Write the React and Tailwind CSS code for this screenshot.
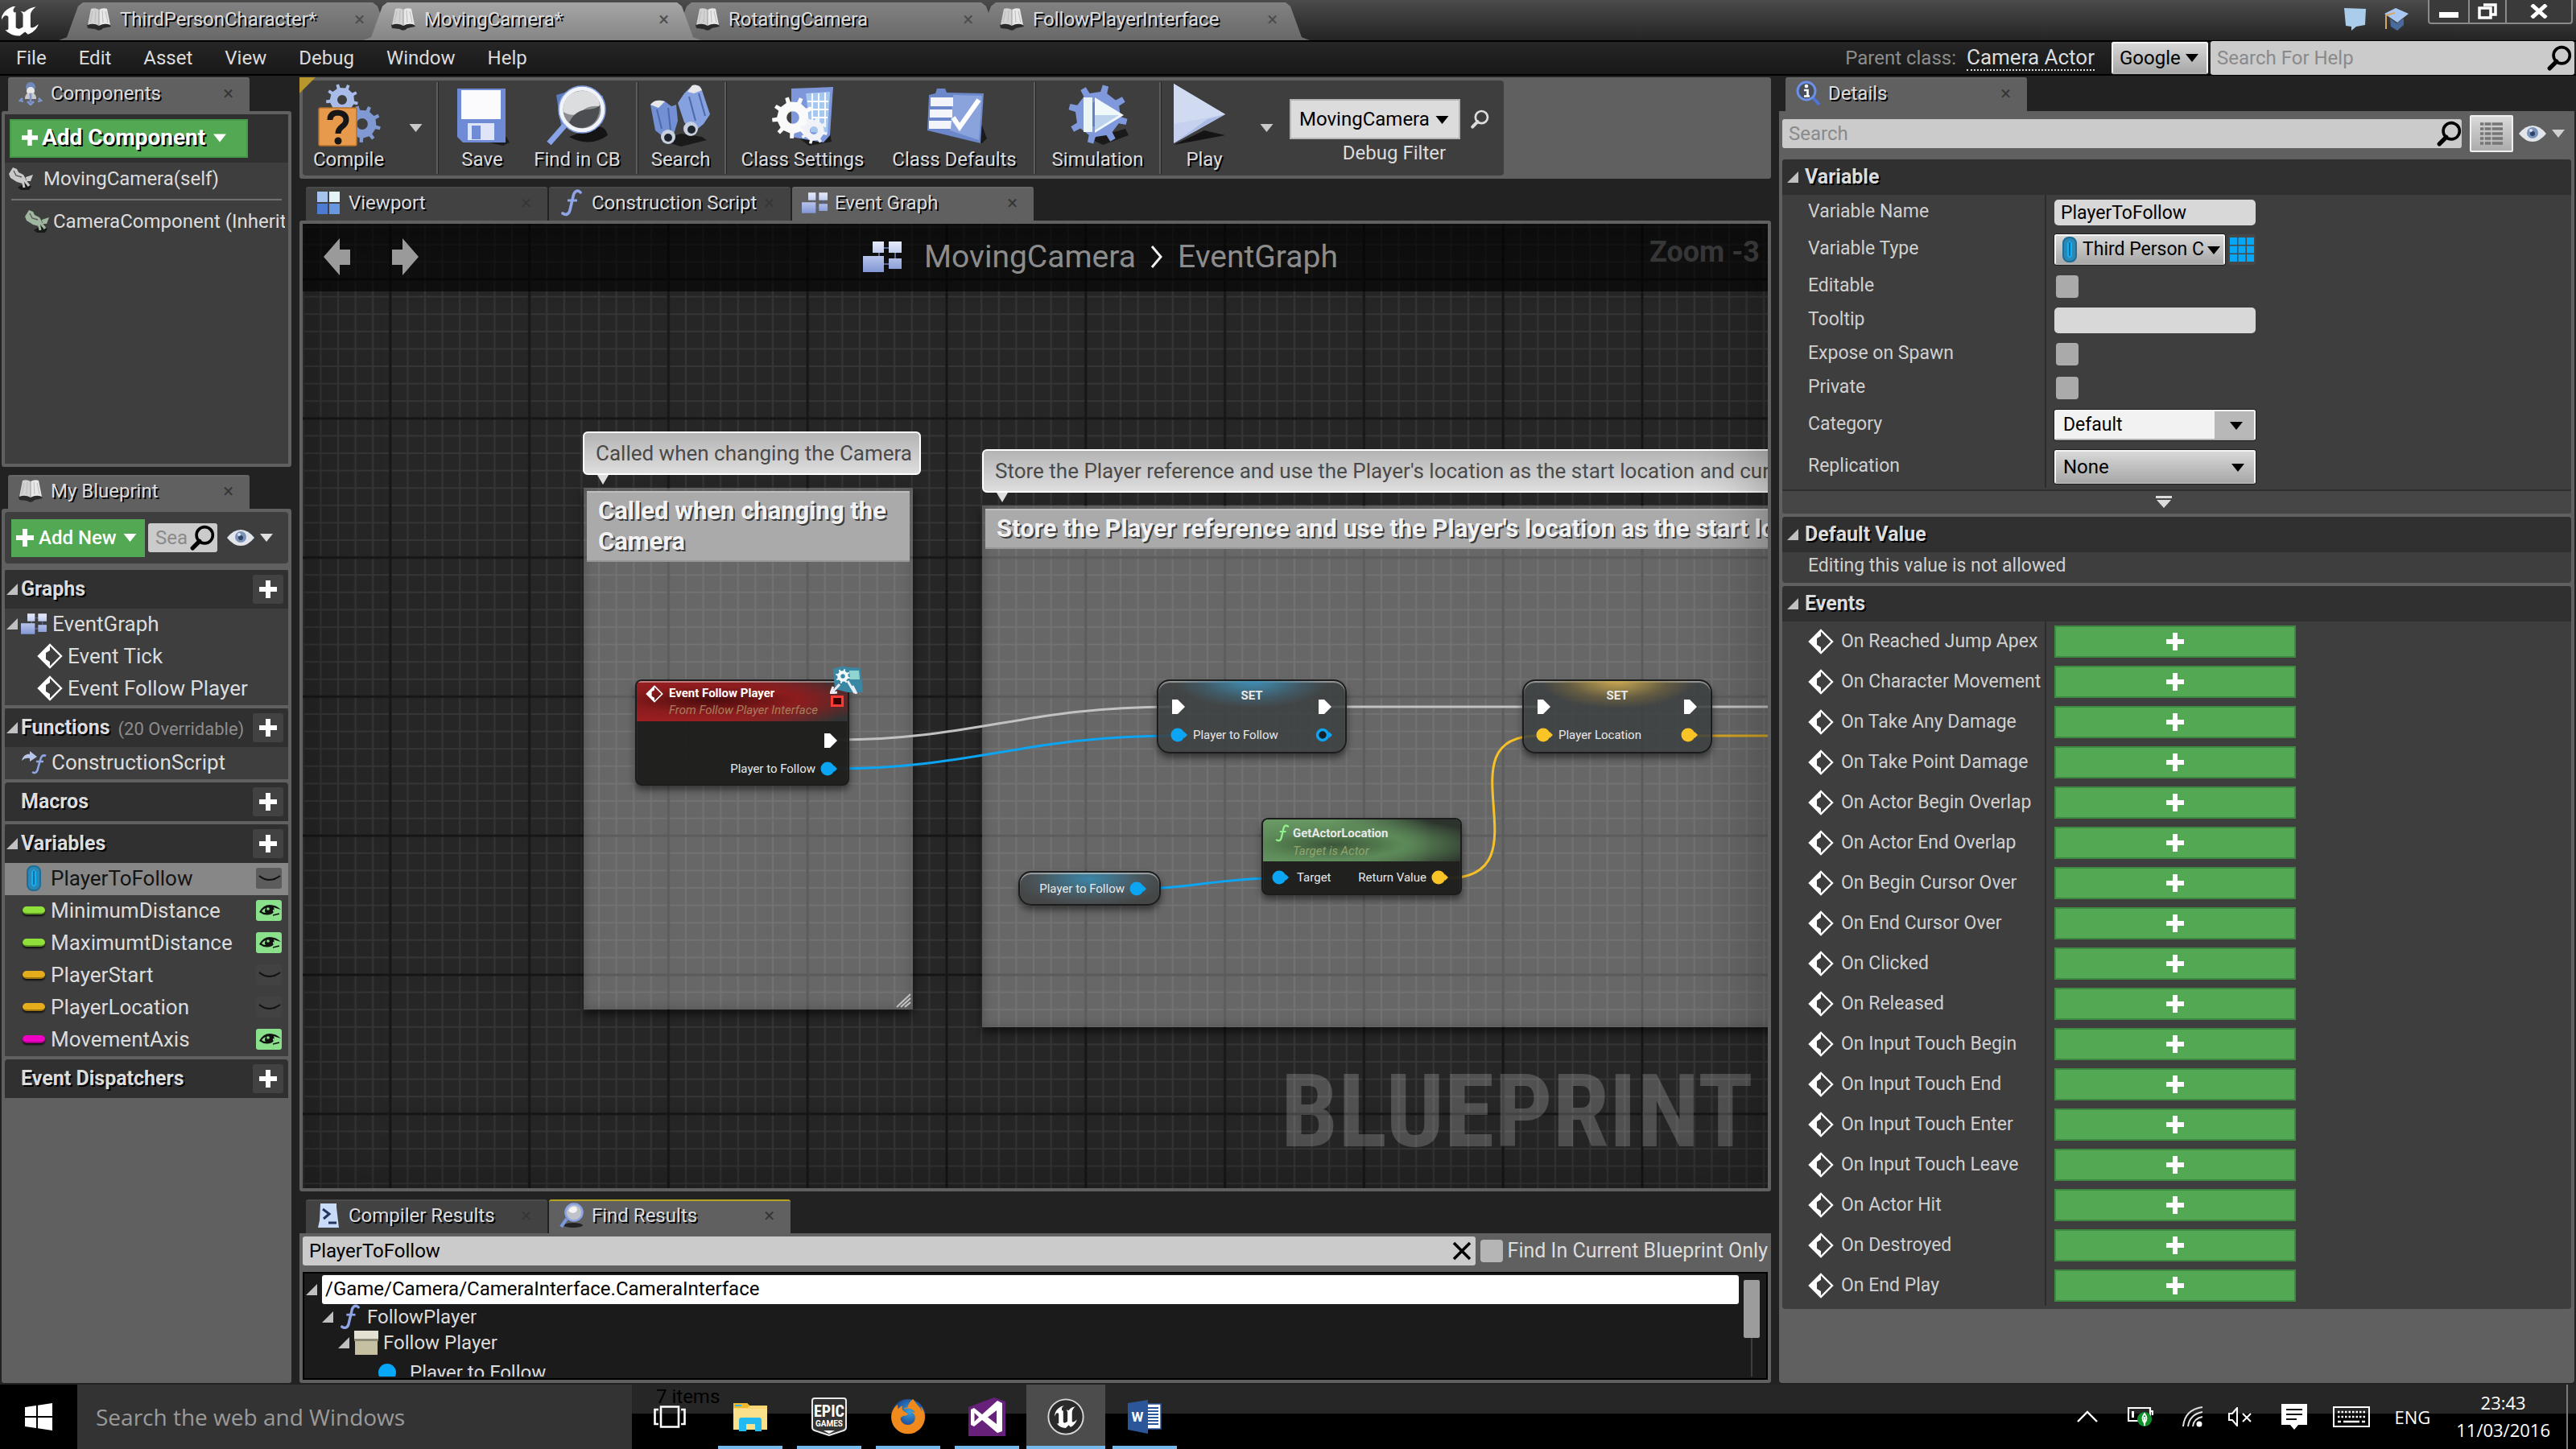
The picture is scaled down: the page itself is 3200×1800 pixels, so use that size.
import React, { useState } from "react";
import { FaFirefoxBrowser } from "react-icons/fa";

const U_PATH =
  "M19.13 13.729c-.206.997-1.126 3.557-4.06 4.942l-1.179-1.325-1.988 2a7.338 7.338 0 0 1-5.804-2.978 2.859 2.859 0 0 0 .65.123c.326.006.678-.114.678-.66v-5.394a.89.89 0 0 0-1.116-.89c-.92.212-1.656 2.509-1.656 2.509a7.304 7.304 0 0 1 2.528-5.597 7.408 7.408 0 0 1 3.73-1.721c-1.006.573-1.57 1.507-1.57 2.29 0 1.262.76 1.109.984.923v7.28a1.157 1.157 0 0 0 .148.256 1.075 1.075 0 0 0 .88.445c.76 0 1.747-.868 1.747-.868V9.172c0-.6-.452-1.324-.905-1.572 0 0 .838-.149 1.484.346a5.537 5.537 0 0 1 .387-.425c1.508-1.48 2.929-1.902 4.112-2.112 0 0-2.151 1.69-2.151 3.96 0 1.687.043 5.801.043 5.801.799.771 1.986-.342 3.059-1.441z";

/* ---------- small icons ---------- */

const Down = ({ className = "w-4 h-3" }) => (
  <svg viewBox="0 0 16 10" className={`shrink-0 ${className}`} aria-hidden="true">
    <path d="M0 0H16L8 10Z" fill="currentColor" />
  </svg>
);

const Corner = () => (
  <svg viewBox="0 0 14 14" className="w-[14px] h-[14px] shrink-0" aria-hidden="true">
    <path d="M14 0V14H0Z" fill="#c0c0c0" />
  </svg>
);

const Plus = ({ className = "w-[22px] h-[22px]" }) => (
  <svg viewBox="0 0 22 22" className={`shrink-0 ${className}`} aria-hidden="true">
    <path d="M8 0H14V8H22V14H14V22H8V14H0V8H8Z" fill="#fff" />
  </svg>
);

const Magnifier = ({ className = "w-[30px] h-[30px]" }) => (
  <svg viewBox="0 0 30 30" className={`shrink-0 ${className}`} aria-hidden="true">
    <circle cx="18" cy="12" r="9.5" fill="none" stroke="currentColor" strokeWidth="3.4" />
    <path d="M12 19L4 27" stroke="currentColor" strokeWidth="5" strokeLinecap="round" />
  </svg>
);

const Eye = () => (
  <svg viewBox="0 0 36 22" className="w-[36px] h-[22px] shrink-0" aria-hidden="true">
    <path d="M1 11Q9 1 18 1T35 11Q27 21 18 21T1 11Z" fill="#e2e6ea" />
    <circle cx="18" cy="10" r="7" fill="#7b93ba" />
    <circle cx="18" cy="11" r="3" fill="#2d4265" />
    <circle cx="16" cy="7" r="2" fill="#d7e2f3" />
  </svg>
);

const EventIcon = ({ className = "w-[32px] h-[32px]" }) => (
  <svg viewBox="0 0 32 32" className={`shrink-0 ${className}`} aria-hidden="true">
    <path d="M16 2L30 16L16 30L2 16Z" fill="none" stroke="#fff" strokeWidth="2.4" />
    <path d="M16 2V9L11 12V20L16 23V30L2 16Z" fill="#fff" />
  </svg>
);

const GraphIcon = ({ className = "w-[32px] h-[26px]" }) => (
  <svg viewBox="0 0 48 38" className={`shrink-0 ${className}`} aria-hidden="true">
    <defs>
      <linearGradient id="graphFill" x1="0" y1="0" x2="0" y2="1">
        <stop offset="0" stopColor="#e6ebfb" />
        <stop offset="1" stopColor="#8297d6" />
      </linearGradient>
    </defs>
    <path d="M20 8H40V28H20Z" fill="none" stroke="#5a6794" strokeWidth="2" />
    <path d="M12 0H26V14H12ZM32 0H48V14H32ZM0 18H26V38H0ZM32 21H48V34H32Z" fill="url(#graphFill)" />
  </svg>
);

const FuncIcon = ({ className = "w-[28px] h-[34px]", color = "#8fa5e6" }) => (
  <svg viewBox="0 0 28 34" className={`shrink-0 ${className}`} aria-hidden="true">
    <path d="M25 4C21 0 17 3 16 9L12 26C11 31 7 33 3 30" fill="none" stroke={color} strokeWidth="3.6" strokeLinecap="round" />
    <path d="M9 14H21" stroke={color} strokeWidth="3" />
  </svg>
);

const ScriptIcon = () => (
  <svg viewBox="0 0 32 30" className="w-[32px] h-[30px] shrink-0" aria-hidden="true">
    <path d="M1 13C3 5 9 4 11 5V1L20 8L11 14V10C7 9 4 10 1 13Z" fill="#b8c5ea" />
    <path d="M31 7C27 5 25 8 24 12L21 23C20 28 17 29 14 27M19 14H28" fill="none" stroke="#8fa5e6" strokeWidth="2.6" />
  </svg>
);

const BookIcon = ({ className = "w-[32px] h-[30px]" }) => (
  <svg viewBox="0 0 32 30" className={`shrink-0 ${className}`} aria-hidden="true">
    <path d="M1 22L4 20L28 20L31 24L21 26Q17 31 11 27L2 26Z" fill="#2a2a2a" />
    <path d="M6 2Q11 0 16 3V23Q9 19 2 22Z" fill="#d2d2d2" />
    <path d="M26 2Q21 0 16 3V23Q23 19 30 22Z" fill="#e8e8e8" />
    <path d="M8 5L5 19M12 4L11 19M20 4L21 19M24 5L27 19" stroke="#bcbcbc" strokeWidth="1" />
    <path d="M16 3V23" stroke="#9a9a9a" strokeWidth="1" />
  </svg>
);

const PawnIcon = () => (
  <svg viewBox="0 0 30 30" className="w-[30px] h-[30px] shrink-0" aria-hidden="true">
    <circle cx="15" cy="7" r="6" fill="#7088bd" />
    <circle cx="15" cy="12" r="5" fill="#e8e8e8" />
    <path d="M8 22Q8 14 15 14T22 22Z" fill="#c9c9c9" />
    <path d="M15 15V26M5 21L2 24L6 25M25 21L28 24L24 25M11 25L15 29L19 25" fill="none" stroke="#7c95cd" strokeWidth="2.6" />
  </svg>
);

const CameraIcon = ({ tint }) => (
  <svg viewBox="0 0 32 28" className="w-[32px] h-[28px] shrink-0" aria-hidden="true">
    <path d="M12 25L20 20L29 23L26 28H16Z" fill="#191919" />
    <path d="M1 8L6 0L11 2L13 6L19 9L22 14L18 20L11 18L3 13Z" fill={tint} />
    <path d="M22 12L31 9L28 17L23 17Z" fill={tint} />
    <path d="M18 16L20 25M20 15L26 23" stroke={tint} strokeWidth="3" />
    <path d="M7 4L10 10L17 12" fill="none" stroke="#5a5a5a" strokeWidth="1.4" />
  </svg>
);

const DetailsIcon = () => (
  <svg viewBox="0 0 32 32" className="w-[32px] h-[32px] shrink-0" aria-hidden="true">
    <path d="M22 21L30 30" stroke="#4d74d6" strokeWidth="4" />
    <circle cx="14" cy="13" r="11" fill="#4a4f5c" stroke="#6c8fe8" strokeWidth="3" />
    <circle cx="14" cy="7" r="2.3" fill="#fff" />
    <path d="M11 12H15.5V19M11 19.5H18" fill="none" stroke="#fff" strokeWidth="2.6" />
  </svg>
);

const ViewportIcon = () => (
  <svg viewBox="0 0 28 28" className="w-[28px] h-[28px] shrink-0" aria-hidden="true">
    <path d="M0 0H13V13H0Z" fill="#a6c3ee" />
    <path d="M15 0H28V13H15Z" fill="#e4f4f6" />
    <path d="M0 15H13V28H0Z" fill="#4c7bd0" />
    <path d="M15 15H28V28H15Z" fill="#6a98e0" />
  </svg>
);

const CompilerIcon = () => (
  <svg viewBox="0 0 28 32" className="w-[28px] h-[32px] shrink-0" aria-hidden="true">
    <path d="M4 1H24V6L27 31H1L3 22Z" fill="#c9dcf7" />
    <path d="M7 8L15 14L8 20M14 25H24" fill="none" stroke="#22355e" strokeWidth="3" />
  </svg>
);

const GlassIcon = () => (
  <svg viewBox="0 0 30 32" className="w-[30px] h-[32px] shrink-0" aria-hidden="true">
    <ellipse cx="17" cy="28" rx="12" ry="3" fill="#222" />
    <path d="M9 20L2 30" stroke="#7c98df" strokeWidth="4" />
    <circle cx="18" cy="12" r="10.5" fill="#bfc3c9" stroke="#8aa4e4" strokeWidth="2.5" />
    <path d="M11 10Q14 4 20 5Q24 8 20 12Q14 14 11 10Z" fill="#f4f4f4" />
  </svg>
);

const Capsule = () => (
  <svg viewBox="0 0 18 32" className="w-[18px] h-[32px] shrink-0" aria-hidden="true">
    <rect x="1" y="1" width="16" height="30" rx="7" fill="#2b88b4" stroke="#1c6d97" strokeWidth="2" />
    <path d="M6 8L9 5L12 8V24L9 27L6 24Z" fill="#0fb0f5" />
    <path d="M9 7V24" stroke="#0a5c86" strokeWidth="1.5" />
  </svg>
);

const gearPath = (cx, cy, r, teeth) => {
  const pts = [];
  for (let i = 0; i < teeth; i++) {
    const a = (i / teeth) * Math.PI * 2;
    const s = (Math.PI * 2) / teeth;
    [[0.14, 0.76], [0.2, 1], [0.46, 1], [0.52, 0.76]].forEach(([t, k]) => {
      pts.push(`${(cx + Math.cos(a + s * t) * r * k).toFixed(1)} ${(cy + Math.sin(a + s * t) * r * k).toFixed(1)}`);
    });
  }
  const h = r * 0.3;
  return `M${pts.join("L")}ZM${cx - h} ${cy}a${h} ${h} 0 1 0 ${2 * h} 0a${h} ${h} 0 1 0 ${-2 * h} 0Z`;
};

const Gear = ({ cx, cy, r, teeth = 9, fill }) => (
  <path d={gearPath(cx, cy, r, teeth)} fill={fill} fillRule="evenodd" />
);

/* ---------- toolbar icons ---------- */

const Big = ({ children }) => (
  <svg viewBox="0 0 80 78" className="w-[80px] h-[78px] shrink-0" aria-hidden="true">
    {children}
  </svg>
);

const CompileIcon = () => (
  <Big>
    <Gear cx={32} cy={20} r={20} fill="#a8bbe9" />
    <Gear cx={57} cy={50} r={23} fill="#8199d2" />
    <rect x="3" y="30" width="47" height="47" rx="2" fill="#e79a4c" stroke="#b8702a" strokeWidth="1.5" />
    <path d="M17 45Q17 36 27 36Q37 37 37 45Q37 50 31 54Q27 57 27 62" fill="none" stroke="#161616" strokeWidth="7" />
    <circle cx="27" cy="71" r="4.5" fill="#161616" />
  </Big>
);

const SaveIcon = () => (
  <Big>
    <path d="M18 66H70L74 73L66 77Z" fill="#1d1d1d" />
    <path d="M9 6H69V73H16L9 66Z" fill="#6f8bd6" />
    <path d="M14 8H63V44H14Z" fill="#fbfbfd" />
    <path d="M22 49H55V70H22Z" fill="#dfe5f6" />
    <path d="M27 52H38V69H27Z" fill="#6f8bd6" />
  </Big>
);

const FindIcon = () => (
  <Big>
    <path d="M14 14L28 10L72 15L70 46L20 52Z" fill="#5b7bbd" />
    <path d="M30 66Q56 80 78 64Q74 50 60 54Z" fill="#141414" />
    <path d="M26 50L5 74" stroke="#88a3e8" strokeWidth="7" />
    <circle cx="46" cy="32" r="26" fill="#8b8d90" stroke="#f1f4fb" strokeWidth="5" />
    <circle cx="46" cy="32" r="29" fill="none" stroke="#86a0e4" strokeWidth="1.5" />
    <path d="M23 35Q21 12 44 9Q67 8 68 28Q52 26 44 36Q34 42 23 35Z" fill="#dcdddf" />
    <path d="M30 48Q38 32 54 32Q64 31 68 27Q68 52 46 55Q36 55 30 48Z" fill="#4b4d50" />
  </Big>
);

const BinocularsIcon = () => (
  <Big>
    <path d="M14 70L40 62L66 66L72 70L40 78Z" fill="#1a1a1a" />
    <path d="M2 26Q8 18 20 22L28 28L34 26L36 46L30 66H18L8 58Z" fill="#7390d4" />
    <path d="M36 24L44 12L54 2Q64 0 66 8L76 38L68 50L56 60L44 48Z" fill="#86a1e0" />
    <path d="M2 26Q8 18 20 22L12 30ZM54 2Q62 0 66 8L56 12L48 10Z" fill="#e8e8e8" />
    <path d="M10 32L16 56M24 30L27 58M50 16L58 46M62 12L70 40" stroke="#4d68ac" strokeWidth="2" />
    <circle cx="24" cy="66" r="9" fill="#c8cfde" />
    <circle cx="24" cy="67" r="5" fill="#20242c" />
    <circle cx="52" cy="56" r="9" fill="#c8cfde" />
    <circle cx="53" cy="57" r="5" fill="#20242c" />
  </Big>
);

const SettingsIcon = () => (
  <Big>
    <path d="M34 66L74 62L76 72L48 77Z" fill="#1a1a1a" />
    <path d="M26 6L78 4L74 64L66 73L26 66Z" fill="#7d97da" />
    <path d="M44 12L74 10L71 62L50 60Z" fill="#a6c8ee" />
    <path d="M52 12V46M60 12V50M68 11V54M46 22H72M46 32H72M52 42H71" stroke="#fff" strokeWidth="1.8" />
    <Gear cx={28} cy={42} r={26} teeth={9} fill="#fafafa" />
    <Gear cx={54} cy={58} r={17} teeth={8} fill="#f0f2f8" />
  </Big>
);

const DefaultsIcon = () => (
  <Big>
    <path d="M42 62L74 74L80 68L74 52Z" fill="#1a1a1a" />
    <path d="M8 14L16 12L18 6H28L30 11L76 12L72 74L6 58Z" fill="#6d88ca" />
    <path d="M38 14L74 15L70 70L34 58Z" fill="#8ba3dd" />
    <path d="M10 17H38V28H10ZM9 32H37V42H9ZM8 46H36L35 56H8Z" fill="#f4f5fa" />
    <path d="M38 42L46 54L70 20" fill="none" stroke="#fff" strokeWidth="6" />
  </Big>
);

const SimulationIcon = () => (
  <Big>
    <path d="M30 68L74 56L78 64L46 76Z" fill="#1a1a1a" />
    <Gear cx={40} cy={38} r={37} teeth={8} fill="#7f99dc" />
    <circle cx="40" cy="38" r="16" fill="#6780c2" />
    <path d="M22 17H33V60H22Z" fill="#e8f4f6" />
    <path d="M36 17L72 39L36 61Z" fill="#f0f8fa" />
    <path d="M36 39H66L36 58Z" fill="#bcd3ee" />
  </Big>
);

const PlayIcon = () => (
  <Big>
    <path d="M2 76L66 64L40 58Z" fill="#141414" />
    <path d="M2 0L66 38L2 74Z" fill="#c5d1ee" />
    <path d="M2 0L66 38L2 50Z" fill="#d0dbf1" />
    <path d="M2 74L66 38L44 44Z" fill="#a9bbe4" />
  </Big>
);

/* ---------- shared pieces ---------- */

const DockTab = ({ icon, label, active, highlight }) => (
  <div
    className={`flex items-center w-[300px] h-[42px] pl-3 pr-5 pb-1 gap-[9px] rounded-t-[3px] border-t-2 ${
      active ? "bg-[#606060]" : "bg-[#424242]"
    } ${highlight ? "border-[#b5a321]" : active ? "border-[#686868]" : "border-[#4a4a4a]"}`}
  >
    <span className="w-8 flex justify-center shrink-0">{icon}</span>
    <span className="flex-1 whitespace-nowrap overflow-hidden [text-shadow:2px_2px_0_#000]">{label}</span>
    <button aria-label={`Close ${label}`} className="text-[#363636] leading-[24px]">×</button>
  </div>
);

const selectLook =
  "appearance-none w-full h-full border-2 border-[#f4f4f4] border-b-[#b0b0b0] outline-1 outline-[#1c1c1c] rounded-[2px] bg-linear-to-b from-[#d8d8d8] to-[#a8a8a8] text-black";

const tabs = [
  { name: "ThirdPersonCharacter*" },
  { name: "MovingCamera*", active: true },
  { name: "RotatingCamera" },
  { name: "FollowPlayerInterface" },
];

const TitleBar = () => (
  <header className="flex h-[52px] bg-linear-to-b from-[#4b4b4b] to-[#242424] border-b-2 border-black">
    <div className="w-[73px] pt-2 pl-[2px]">
      <svg viewBox="4.8 5.2 14.4 14.3" preserveAspectRatio="none" className="w-[46px] h-[37px]" aria-label="Unreal Engine">
        <path d={U_PATH} fill="#fff" />
      </svg>
    </div>
    <div className="flex items-end flex-1">
      {tabs.map((t) => (
        <div
          key={t.name}
          className={`relative flex items-center w-[420px] h-[47px] -mr-[42px] pl-[34px] pr-[40px] pb-[5px] gap-[10px] [clip-path:polygon(0_100%,10px_92%,24px_10%,30px_0,390px_0,396px_10%,410px_92%,100%_100%)] ${
            t.active
              ? "z-10 bg-linear-to-b from-[#a6a6a6] to-[#858585]"
              : "bg-linear-to-b from-[#828282] to-[#686868]"
          }`}
        >
          <BookIcon />
          <span className="flex-1 whitespace-nowrap [text-shadow:2px_2px_0_#000]">{t.name}</span>
          <button aria-label={`Close ${t.name}`} className="text-[#4c4c4c] leading-[24px]">×</button>
        </div>
      ))}
    </div>
    <div className="flex items-start">
      <svg viewBox="0 0 30 30" className="w-[30px] h-[30px] mt-[9px] mr-[20px]" aria-label="Feedback">
        <path d="M1 1L28 2L27 22L16 24L10 29L10 24L3 23Z" fill="#a9cdea" />
      </svg>
      <svg viewBox="0 0 32 30" className="w-[32px] h-[30px] mt-[9px] mr-[23px]" aria-label="Tutorials">
        <path d="M8 14L16 20L25 14V22L17 29L9 24Z" fill="#4a6a9c" />
        <path d="M1 8L15 1L31 8L17 19Z" fill="#a9c7f0" />
        <path d="M14 7L3 10V27" fill="none" stroke="#d6a762" strokeWidth="2" />
      </svg>
      <div className="flex h-[30px] mr-1 border-2 border-t-0 border-[#8a8a8a] rounded-b-[4px] bg-[#3a3a3a]">
        <button aria-label="Minimise" className="w-[50px] flex items-end justify-center pb-[6px] border-r-2 border-[#8a8a8a]">
          <span className="w-[24px] h-[7px] bg-white" />
        </button>
        <button aria-label="Restore" className="w-[46px] flex justify-center items-center border-r-2 border-[#8a8a8a]">
          <svg viewBox="0 0 24 20" className="w-[24px] h-[20px]">
            <path d="M7 2H22V14H17M2 6H16V18H2Z" fill="none" stroke="#fff" strokeWidth="3.5" />
          </svg>
        </button>
        <button aria-label="Close" className="w-[80px] flex justify-center items-center">
          <svg viewBox="0 0 22 18" className="w-[22px] h-[18px]">
            <path d="M2 1L20 17M20 1L2 17" stroke="#fff" strokeWidth="5" />
          </svg>
        </button>
      </div>
    </div>
  </header>
);

const MenuBar = () => (
  <nav className="flex items-center h-[42px] bg-linear-to-b from-[#262626] to-[#181818] border-b-2 border-black">
    <div className="flex gap-10 pl-5 flex-1">
      {["File", "Edit", "Asset", "View", "Debug", "Window", "Help"].map((m) => (
        <button key={m}>{m}</button>
      ))}
    </div>
    <span className="text-[#8c8c8c] mr-[13px]">Parent class:</span>
    <a href="#camera-actor" className="border-b-2 border-dotted border-[#e0e0e0] mr-[21px] text-[26px] leading-[30px]">
      Camera Actor
    </a>
    <div className="relative w-[120px] h-[40px]">
      <select aria-label="Search engine" className={`${selectLook} pl-2 leading-[32px]`}>
        <option>Google</option>
      </select>
      <Down className="w-4 h-[10px] absolute right-[12px] top-[15px] text-black pointer-events-none" />
    </div>
    <label className="flex items-center w-[452px] h-[42px] ml-[3px] mr-[2px] bg-[#cbcbcb] rounded-[3px] text-black">
      <input
        aria-label="Search For Help"
        placeholder="Search For Help"
        className="flex-1 min-w-0 h-full pl-[8px] bg-transparent placeholder:text-[#8a8a8a] outline-none"
      />
      <Magnifier className="w-[32px] h-[32px] mr-[3px]" />
    </label>
  </nav>
);

/* ---------- left column ---------- */

const Components = () => (
  <section>
    <div className="pl-2">
      <DockTab icon={<PawnIcon />} label="Components" active />
    </div>
    <div className="h-[442px] border-4 border-[#606060] rounded-[3px] bg-[#3e3e3e] overflow-hidden">
      <div className="h-[60px] bg-[#303030] p-[6px]">
        <button className="flex items-center gap-[5px] h-[48px] w-[296px] pl-[13px] pb-[2px] bg-[#52a853] border-2 border-[#46984a] text-white text-[28px] font-bold whitespace-nowrap [text-shadow:2px_2px_0_#000]">
          <Plus className="w-[20px] h-[20px]" />
          Add Component
          <Down className="w-4 h-[11px] ml-[5px]" />
        </button>
      </div>
      <div className="flex items-center gap-3 h-[40px] pl-1">
        <CameraIcon tint="#c9c9c9" />
        <span>MovingCamera(self)</span>
      </div>
      <div className="h-[2px] bg-[#707070] mx-2 mt-[5px] mb-[6px]" />
      <div className="flex items-center gap-1 h-[40px] pl-6 mr-1 overflow-hidden whitespace-nowrap">
        <CameraIcon tint="#9fb79f" />
        <span>CameraComponent (Inherited)</span>
      </div>
    </div>
  </section>
);

const SectionHead = ({ title, note, open, add }) => (
  <div className="flex items-center h-[48px] pl-[2px] pr-[6px] bg-[#303030] rounded-t-[4px] text-[25px] whitespace-nowrap">
    <span className="w-[18px]">{open && <Corner />}</span>
    <span className="font-bold [text-shadow:2px_2px_0_#000]">{title}</span>
    {note && <span className="text-[#8c8c8c] text-[22px] ml-[10px] mt-1">{note}</span>}
    <span className="flex-1" />
    {add && (
      <button aria-label={`Add to ${title}`} className="w-[38px] h-[36px] flex items-center justify-center bg-[#424242] rounded-[3px]">
        <Plus />
      </button>
    )}
  </div>
);

const TreeRow = ({ children, className = "pl-5" }) => (
  <div className={`flex items-center h-[40px] pb-[2px] text-[26px] whitespace-nowrap ${className}`}>{children}</div>
);

const ShutEye = () => (
  <svg viewBox="0 0 32 26" className="w-[32px] h-[26px]" aria-hidden="true">
    <path d="M4 10Q16 20 30 10M10 14L16 15L24 14" fill="none" stroke="#111" strokeWidth="2" />
  </svg>
);

const OpenEye = () => (
  <svg viewBox="0 0 32 26" className="w-[32px] h-[26px]" aria-hidden="true">
    <path d="M4 15Q9 6 17 6Q25 6 31 12Q24 10 22 9Q24 14 20 17Q12 21 4 15Z" fill="#111" />
    <path d="M7 14Q9 11 12 10Q10 14 12 16Q9 16 7 14ZM21 12L24 13L21 15Z" fill="#8be08c" />
    <path d="M21 19L29 17" stroke="#111" strokeWidth="1.6" />
    <circle cx="15" cy="11" r="1.8" fill="#8be08c" />
  </svg>
);

const variables = [
  { name: "PlayerToFollow", selected: true },
  { name: "MinimumDistance", color: "bg-[#8fe03a]", open: true },
  { name: "MaximumtDistance", color: "bg-[#8fe03a]", open: true },
  { name: "PlayerStart", color: "bg-[#e5ad1c]" },
  { name: "PlayerLocation", color: "bg-[#e5ad1c]" },
  { name: "MovementAxis", color: "bg-[#ee00c4]", open: true },
];

const MyBlueprint = () => (
  <section className="flex flex-col flex-1 mt-[10px]">
    <div className="pl-2">
      <DockTab icon={<BookIcon />} label="My Blueprint" active />
    </div>
    <div className="flex-1 p-1 bg-[#606060] rounded-[3px] flex flex-col gap-1">
      <div className="flex items-center h-[64px] mb-1 px-2 bg-[#3e3e3e] rounded-[4px]">
        <button className="flex items-center gap-[6px] w-[166px] h-[47px] pl-[6px] bg-[#52a853] text-white whitespace-nowrap font-medium">
          <Plus />
          Add New
          <Down className="w-[17px] h-[10px] ml-[2px]" />
        </button>
        <label className="flex items-center w-[86px] h-[36px] ml-1 bg-[#cbcbcb] rounded-[3px] text-black">
          <input
            aria-label="Search blueprint"
            placeholder="Search"
            className="w-[48px] pl-[9px] bg-transparent placeholder:text-[#8a8a8a] outline-none"
          />
          <Magnifier className="w-[34px] h-[32px] ml-[2px]" />
        </label>
        <button aria-label="View options" className="flex items-center gap-[6px] ml-[11px] text-[#e0e0e0]">
          <Eye />
          <Down className="w-[16px] h-[10px]" />
        </button>
      </div>
      <div className="bg-[#3e3e3e]">
        <SectionHead title="Graphs" open add />
        <TreeRow className="pl-[2px]">
          <span className="w-[18px]"><Corner /></span>
          <GraphIcon />
          <span className="ml-[7px]">EventGraph</span>
        </TreeRow>
        <TreeRow className="pl-[40px] gap-[6px]"><EventIcon />Event Tick</TreeRow>
        <TreeRow className="pl-[40px] gap-[6px]"><EventIcon />Event Follow Player</TreeRow>
      </div>
      <div className="bg-[#3e3e3e]">
        <SectionHead title="Functions" note="(20 Overridable)" open add />
        <TreeRow className="pl-5 gap-[6px]"><ScriptIcon />ConstructionScript</TreeRow>
      </div>
      <SectionHead title="Macros" add />
      <div className="bg-[#3e3e3e]">
        <SectionHead title="Variables" open add />
        {variables.map((v) => (
          <TreeRow key={v.name} className={`pl-[22px] pr-2 ${v.selected ? "bg-[#878787] text-[#141414]" : ""}`}>
            <span className="w-[35px] flex shrink-0">
              {v.selected ? (
                <span className="pl-[5px]"><Capsule /></span>
              ) : (
                <span className={`w-[28px] h-[10px] rounded-full border-b-2 border-black/30 shadow-[0_2px_2px_#111] ${v.color}`} />
              )}
            </span>
            <span className="flex-1">{v.name}</span>
            <button
              aria-label={`Toggle ${v.name}`}
              className={`rounded-[3px] ${v.open ? "bg-[#8be08c]" : v.selected ? "bg-[#5c5c5c]" : "bg-[#424242]"}`}
            >
              {v.open ? <OpenEye /> : <ShutEye />}
            </button>
          </TreeRow>
        ))}
      </div>
      <SectionHead title="Event Dispatchers" add />
    </div>
  </section>
);

/* ---------- centre column ---------- */

const Tool = ({ icon, label, className }) => (
  <button className={`flex flex-col items-center pt-1 ${className}`}>
    {icon}
    <span className="leading-[32px] whitespace-nowrap [text-shadow:2px_2px_0_#000]">{label}</span>
  </button>
);

const Sep = () => <div className="w-[3px] my-[2px] bg-[#5c5c5c] border-r border-[#222]" />;

const Toolbar = () => (
  <div className="relative flex bg-[#606060] rounded-[3px] p-1 h-[126px]">
    <div className="flex bg-[#3e3e3e] rounded-[4px] pr-[18px]">
      <Tool icon={<CompileIcon />} label="Compile" className="w-[114px]" />
      <button aria-label="Compile options" className="w-[52px] pl-[18px] text-[#c8c8c8]"><Down className="w-[17px] h-[10px]" /></button>
      <Sep />
      <Tool icon={<SaveIcon />} label="Save" className="w-[108px]" />
      <Tool icon={<FindIcon />} label="Find in CB" className="w-[128px] mr-[9px]" />
      <Sep />
      <Tool icon={<BinocularsIcon />} label="Search" className="w-[105px] mr-[2px]" />
      <Sep />
      <Tool icon={<SettingsIcon />} label="Class Settings" className="w-[188px]" />
      <Tool icon={<DefaultsIcon />} label="Class Defaults" className="w-[189px] mr-[4px]" />
      <Sep />
      <Tool icon={<SimulationIcon />} label="Simulation" className="w-[153px]" />
      <Sep />
      <Tool icon={<PlayIcon />} label="Play" className="w-[106px]" />
      <button aria-label="Play options" className="w-[48px] flex justify-center items-center text-[#c8c8c8]"><Down className="w-[17px] h-[10px]" /></button>
      <div className="flex flex-col justify-center pt-[12px] pl-[5px]">
        <div className="flex items-center gap-3">
          <div className="relative w-[212px] h-[50px]">
            <select
              aria-label="Debug object"
              className="appearance-none w-full h-full pl-[10px] bg-[#dcdcdc] border-2 border-[#b5b5b5] text-black"
            >
              <option>MovingCamera</option>
            </select>
            <Down className="w-[17px] h-[10px] absolute right-[14px] top-[21px] text-black pointer-events-none" />
          </div>
          <button aria-label="Find debug object"><Magnifier className="w-[24px] h-[26px]" /></button>
        </div>
        <span className="leading-[34px] text-center pl-3">Debug Filter</span>
      </div>
    </div>
    <svg viewBox="0 0 20 20" className="absolute left-0 top-0 w-5 h-5" aria-hidden="true">
      <path d="M0 0H20L0 20Z" fill="#b8972d" />
    </svg>
  </div>
);

const Grid = () => (
  <svg className="absolute inset-0 w-full h-full" aria-hidden="true">
    <defs>
      <pattern id="minor" x="108.8" y="69" width="21.6" height="21.6" patternUnits="userSpaceOnUse">
        <path d="M0 0H21.6M0 21.6H21.6M0 0V21.6M21.6 0V21.6" stroke="#353535" strokeWidth="2.2" />
      </pattern>
      <pattern id="major" x="108.8" y="69" width="172.8" height="172.8" patternUnits="userSpaceOnUse">
        <path d="M0 0H172.8M0 172.8H172.8M0 0V172.8M172.8 0V172.8" stroke="#151515" strokeWidth="3" />
      </pattern>
    </defs>
    <rect width="100%" height="100%" fill="url(#minor)" />
    <rect width="100%" height="100%" fill="url(#major)" />
  </svg>
);

const Wires = () => (
  <svg className="absolute inset-0 w-full h-full" fill="none" strokeWidth="3" aria-hidden="true">
    <path d="M664 641C830 641 900 600 1078 600" stroke="#c2c2c2" />
    <path d="M660 677C830 677 900 636 1080 636" stroke="#0ba5f3" />
    <path d="M1278 600H1535M1733 600H3000" stroke="#c2c2c2" />
    <path d="M1720 636H3000" stroke="#d4a521" />
    <path d="M1421 813C1550 813 1410 636 1534 636" stroke="#f6c126" />
    <path d="M1042 826C1100 826 1140 813 1206 813" stroke="#0ba5f3" />
  </svg>
);

const Exec = () => (
  <svg viewBox="0 0 16 18" className="w-4 h-[18px] shrink-0" aria-hidden="true">
    <path d="M0 0H7L16 9L7 18H0Z" fill="#fff" />
  </svg>
);

const Pin = ({ color, hollow }) => (
  <svg viewBox="0 0 22 18" className="w-[22px] h-[18px] shrink-0" aria-hidden="true">
    <circle cx="9" cy="9" r={hollow ? 6.5 : 8.5} fill={hollow ? "#162026" : color} stroke={color} strokeWidth={hollow ? 3.5 : 0} />
    <path d="M17 5L21 9L17 13Z" fill={color} />
  </svg>
);

const BLUE = "#0ba5f3";
const YELLOW = "#f9c426";

const glass =
  "border-2 border-[#1c1c1c] shadow-[0_5px_8px_rgba(0,0,0,0.5),inset_0_2px_1px_rgba(255,255,255,0.45)]";

const SetNode = ({ className, tint, color, label, hollow }) => (
  <div className={`absolute top-[566px] w-[236px] h-[92px] rounded-[16px] bg-[#3c3f40]/85 ${glass} ${className}`}>
    <div className={`h-[34px] mx-[20px] text-center font-bold leading-[36px] ${tint}`}>SET</div>
    <div className="flex justify-between px-[17px] -mt-[11px]"><Exec /><Exec /></div>
    <div className="flex items-center px-[15px] mt-[17px]">
      <Pin color={color} />
      <span className="flex-1 pl-[6px] leading-[18px]">{label}</span>
      <Pin color={color} hollow={hollow} />
    </div>
  </div>
);

const Bubble = ({ className, children }) => (
  <div
    className={`absolute h-[54px] pl-[14px] flex items-center rounded-[6px] border-2 border-white bg-linear-to-b from-[#b4b4b4] to-[#dedede] text-[#4a4a4a] text-[26px] whitespace-nowrap ${className}`}
  >
    {children}
    <svg viewBox="0 0 14 12" className="absolute left-[16px] top-[52px] w-[14px] h-3" aria-hidden="true">
      <path d="M0 0H14L7 12Z" fill="#dedede" />
    </svg>
  </div>
);

const Comment = ({ className, children }) => (
  <div className={`absolute h-[648px] p-1 bg-white/30 shadow-[0_6px_10px_rgba(0,0,0,0.6),inset_0_0_12px_rgba(0,0,0,0.25)] ${className}`}>
    <div className="px-[14px] py-[4px] bg-[#aaaaaa] border-t-2 border-t-[#bdbdbd] border-b-2 border-b-[#969696] text-[#f2f2f2] text-[31px] leading-[38px] font-bold overflow-hidden [text-shadow:2px_2px_0_#3c3c3c]">
      {children}
    </div>
  </div>
);

const Graph = () => (
  <div className="relative flex-1 min-h-[1000px] border-4 border-[#606060] rounded-[3px] bg-[#262626] overflow-hidden">
    <Grid />
    <div className="absolute right-[18px] bottom-[30px] text-[127px] leading-[130px] font-bold text-white/20 font-['Roboto_Condensed','Liberation_Sans_Narrow',Roboto,sans-serif]">
      BLUEPRINT
    </div>

    <Comment className="left-[349px] top-[328px] w-[409px]">Called when changing the Camera</Comment>
    <svg viewBox="0 0 20 18" className="absolute left-[736px] top-[956px] w-5 h-[18px]" aria-hidden="true">
      <path d="M2 17L19 1M7 17L19 6M12 17L19 11" stroke="#c4c4c4" strokeWidth="2" />
    </svg>
    <Comment className="left-[844px] top-[350px] w-[1800px]">
      <span className="whitespace-nowrap">Store the Player reference and use the Player's location as the start location and current Camera</span>
    </Comment>
    <Bubble className="left-[348px] top-[258px] w-[420px]">Called when changing the Camera</Bubble>
    <Bubble className="left-[844px] top-[280px] w-[1800px]">
      Store the Player reference and use the Player's location as the start location and current Camera
    </Bubble>

    <Wires />

    <div className="text-[15px] text-[#e8e8e8] whitespace-nowrap">
      <div className={`absolute left-[413px] top-[566px] w-[266px] h-[132px] rounded-[8px] bg-[#1c1e1b]/95 overflow-hidden ${glass}`}>
        <div className="flex h-[50px] pl-[11px] pt-[3px] gap-[7px] border-t-2 border-white/40 bg-[radial-gradient(ellipse_at_35%_45%,#4a0c0c_0%,#8c1c1e_45%,transparent_90%),linear-gradient(90deg,#a32022_40%,#333_95%)]">
          <EventIcon className="w-[22px] h-[22px]" />
          <div className="leading-[21px]">
            <div className="font-bold text-white">Event Follow Player</div>
            <div className="italic text-[#a57f5c]">From Follow Player Interface</div>
          </div>
        </div>
        <div className="flex justify-end pr-[13px] mt-[15px]"><Exec /></div>
        <div className="flex items-center justify-end pr-[12px] mt-[17px] gap-[6px] leading-[18px]">
          Player to Follow
          <Pin color={BLUE} />
        </div>
      </div>
      <span className="absolute left-[656px] top-[586px] w-[16px] h-[14px] border-[3px] border-[#ff3b35] bg-[#3a0000]" />
      <svg viewBox="0 0 42 34" className="absolute left-[655px] top-[550px] w-[42px] h-[34px]" aria-hidden="true">
        <path d="M4 3L14 0L38 2L41 32H22L6 28Z" fill="#3a87a3" />
        <path d="M24 5H36L37 16H25Z" fill="#8fd4cf" />
        <Gear cx={16} cy={12} r={9} teeth={8} fill="#f2fafc" />
        <path d="M12 22L2 33M4 25L1 33L9 32M22 18L31 33M28 24L33 34" stroke="#e8ecf6" strokeWidth="3" />
      </svg>

      <SetNode
        className="left-[1061px]"
        tint="bg-[radial-gradient(ellipse_at_50%_0%,#3f8fb5_0%,rgba(63,120,150,0.4)_45%,transparent_70%)]"
        color={BLUE}
        label="Player to Follow"
        hollow
      />
      <SetNode
        className="left-[1515px]"
        tint="bg-[radial-gradient(ellipse_at_50%_0%,#c9a850_0%,rgba(150,125,60,0.4)_45%,transparent_70%)]"
        color={YELLOW}
        label="Player Location"
      />

      <div className={`absolute left-[1191px] top-[738px] w-[249px] h-[96px] rounded-[8px] bg-[#1c1e1b]/95 overflow-hidden ${glass}`}>
        <div className="flex h-[52px] pl-[15px] pt-[6px] gap-[4px] bg-[radial-gradient(ellipse_at_35%_60%,#3c5638_0%,#5d8a59_40%,transparent_85%),linear-gradient(90deg,#6d9f69_35%,#2c332c_85%)]">
          <FuncIcon className="w-[18px] h-[22px]" color="#8ff08c" />
          <div className="leading-[22px]">
            <div className="font-bold">GetActorLocation</div>
            <div className="italic text-[#93a56e]">Target is Actor</div>
          </div>
        </div>
        <div className="flex items-center pl-[11px] pr-[14px] mt-[11px] leading-[18px]">
          <Pin color={BLUE} />
          <span className="flex-1 pl-[9px]">Target</span>
          <span className="pr-[6px]">Return Value</span>
          <Pin color={YELLOW} />
        </div>
      </div>

      <div className={`absolute left-[889px] top-[804px] w-[177px] h-[43px] rounded-[16px] flex items-center justify-end pr-[15px] gap-[6px] bg-[radial-gradient(ellipse_at_50%_20%,#3b86a8_0%,#4a5459_55%,#454646_80%)] ${glass}`}>
        Player to Follow
        <Pin color={BLUE} />
      </div>
    </div>

    <div className="absolute inset-0 shadow-[inset_0_0_90px_rgba(0,0,0,0.35)] pointer-events-none" />

    <div className="absolute inset-x-0 top-0 h-[84px] flex items-center pl-[26px] pr-[10px] pb-[3px] bg-black/60 text-[39px] text-[#8c8c8c]">
      <button aria-label="Back">
        <svg viewBox="0 0 34 46" className="w-[34px] h-[46px]"><path d="M0 23L20 0V14H33V33H20V46Z" fill="#9a9a9a" /></svg>
      </button>
      <button aria-label="Forward" className="ml-[50px]">
        <svg viewBox="0 0 34 46" className="w-[34px] h-[46px]"><path d="M34 23L14 0V14H1V33H14V46Z" fill="#9a9a9a" /></svg>
      </button>
      <span className="ml-[552px]"><GraphIcon className="w-[48px] h-[38px]" /></span>
      <a href="#moving-camera" className="ml-[28px]">MovingCamera</a>
      <svg viewBox="0 0 16 28" className="w-4 h-7 mx-[18px]" aria-hidden="true">
        <path d="M2 1L13 14L2 27" fill="none" stroke="#f0f0f0" strokeWidth="3" />
      </svg>
      <span className="flex-1">EventGraph</span>
      <span className="font-bold text-[36px] text-[#363636] pb-3">Zoom -3</span>
    </div>
  </div>
);

const FindResults = () => {
  const [query, setQuery] = useState("PlayerToFollow");
  return (
    <section className="mt-[10px]">
      <div className="flex gap-[2px] pl-2">
        <DockTab icon={<CompilerIcon />} label="Compiler Results" />
        <DockTab icon={<GlassIcon />} label="Find Results" active highlight />
      </div>
      <div className="h-[186px] p-1 bg-[#606060] rounded-b-[3px]">
        <div className="flex items-center h-[36px]">
          <label className="flex flex-1 items-center h-full mr-[6px] pr-[5px] bg-[#cbcbcb] rounded-[3px] text-black">
            <input
              aria-label="Find in blueprint"
              value={query}
              onChange={(e) => setQuery(e.target.value)}
              className="flex-1 pl-[8px] bg-transparent outline-none"
            />
            <button aria-label="Clear" onClick={() => setQuery("")}>
              <svg viewBox="0 0 24 24" className="w-6 h-6"><path d="M2 2L22 22M22 2L2 22" stroke="#000" strokeWidth="3.5" /></svg>
            </button>
          </label>
          <label className="flex items-center gap-[6px] whitespace-nowrap text-[25px]">
            <input type="checkbox" className="appearance-none w-[28px] h-[28px] bg-[#b5b5b5] rounded-[4px]" />
            Find In Current Blueprint Only
          </label>
        </div>
        <div className="flex h-[134px] mt-2 p-[2px] border-2 border-black bg-[#1b1b1b] overflow-hidden">
          <div className="flex-1 overflow-hidden leading-[32px]">
            <div className="flex items-center h-[36px]">
              <span className="w-[20px] flex"><Corner /></span>
              <span className="flex-1 h-full leading-[34px] pl-1 bg-white text-black rounded-[3px]">
                /Game/Camera/CameraInterface.CameraInterface
              </span>
            </div>
            <div className="flex items-center h-[32px] pl-[20px]">
              <Corner />
              <FuncIcon className="w-[26px] h-[32px] ml-[8px] mr-[8px]" />
              FollowPlayer
            </div>
            <div className="flex items-center h-[32px] pl-[40px]">
              <Corner />
              <svg viewBox="0 0 30 30" className="w-[30px] h-[30px] ml-[6px] mr-[6px]" aria-hidden="true">
                <path d="M0 0H30V10H0Z" fill="#e3e2d2" />
                <path d="M1 12H29V30H1Z" fill="#c6c0a2" />
                <path d="M0 10H30V13H0Z" fill="#8d8a76" />
              </svg>
              Follow Player
            </div>
            <div className="flex items-center h-[42px] pl-[90px]">
              <span className="w-[22px] h-[22px] rounded-full bg-[#06a7f6] mr-[17px]" />
              Player to Follow
            </div>
          </div>
          <div className="flex flex-col items-center w-[32px] pt-[6px] shrink-0">
            <div className="w-[20px] h-[72px] bg-[#9c9c9c] rounded-[2px]" />
            <div className="w-[2px] flex-1 bg-[#3c3c3c]" />
          </div>
        </div>
      </div>
    </section>
  );
};

/* ---------- details ---------- */

const fieldRows = [
  { label: "Variable Name", kind: "text", value: "PlayerToFollow", h: "h-[44px]" },
  { label: "Variable Type", kind: "type", h: "h-[48px]" },
  { label: "Editable", kind: "check", h: "h-[44px]" },
  { label: "Tooltip", kind: "text", value: "", h: "h-[40px]" },
  { label: "Expose on Spawn", kind: "check", h: "h-[44px]" },
  { label: "Private", kind: "check", h: "h-[40px]" },
  { label: "Category", kind: "category", h: "h-[52px]" },
  { label: "Replication", kind: "replication", h: "h-[52px]" },
];

const Field = ({ row, id }) => {
  if (row.kind === "text")
    return <input id={id} defaultValue={row.value} className="w-[250px] h-[32px] px-[8px] bg-[#d8d8d8] rounded-[5px] text-black outline-none" />;
  if (row.kind === "check")
    return <input id={id} type="checkbox" className="appearance-none block w-[28px] h-[28px] ml-[2px] bg-[#aaaaaa] rounded-[4px]" />;
  if (row.kind === "type")
    return (
      <div className="flex items-center gap-1">
        <div className="relative w-[212px] h-[38px]">
          <select id={id} className={`${selectLook} pl-[33px] pr-[24px] overflow-hidden`}>
            <option>Third Person Character Reference</option>
          </select>
          <span className="absolute left-[10px] top-[3px] pointer-events-none"><Capsule /></span>
          <Down className="w-4 h-[10px] absolute right-[6px] top-[15px] text-black pointer-events-none" />
        </div>
        <button aria-label="Array type" className="w-[34px] h-[38px] bg-[#474747] rounded-[3px] flex items-center justify-center">
          <svg viewBox="0 0 30 30" className="w-[30px] h-[30px]">
            <path d="M0 0H9V9H0ZM10.5 0H19.5V9H10.5ZM21 0H30V9H21ZM0 10.5H9V19.5H0ZM10.5 10.5H19.5V19.5H10.5ZM21 10.5H30V19.5H21ZM0 21H9V30H0ZM10.5 21H19.5V30H10.5ZM21 21H30V30H21Z" fill="#06a7f6" />
          </svg>
        </button>
      </div>
    );
  if (row.kind === "category")
    return (
      <div className="relative w-[250px] h-[38px]">
        <select id={id} className={`${selectLook} pl-[9px] bg-linear-to-r from-[#f2f2f2] from-80% to-[#b8b8b8] to-80%`}>
          <option>Default</option>
        </select>
        <Down className="w-4 h-[10px] absolute right-[16px] top-[15px] text-black pointer-events-none" />
      </div>
    );
  return (
    <div className="relative w-[250px] h-[42px]">
      <select id={id} className={`${selectLook} pl-[9px] text-[24px]`}>
        <option>None</option>
      </select>
      <Down className="w-4 h-[10px] absolute right-[14px] top-[17px] text-black pointer-events-none" />
    </div>
  );
};

const events = [
  "On Reached Jump Apex",
  "On Character Movement",
  "On Take Any Damage",
  "On Take Point Damage",
  "On Actor Begin Overlap",
  "On Actor End Overlap",
  "On Begin Cursor Over",
  "On End Cursor Over",
  "On Clicked",
  "On Released",
  "On Input Touch Begin",
  "On Input Touch End",
  "On Input Touch Enter",
  "On Input Touch Leave",
  "On Actor Hit",
  "On Destroyed",
  "On End Play",
];

const DetailsHead = ({ children }) => (
  <h2 className="flex items-center gap-[8px] h-[44px] pl-[6px] bg-[#303030] rounded-t-[4px] text-[25px] font-bold [text-shadow:2px_2px_0_#000]">
    <Corner />
    {children}
  </h2>
);

const Details = () => (
  <aside className="flex flex-col w-[988px] shrink-0">
    <div className="pl-2">
      <DockTab icon={<DetailsIcon />} label="Details" active />
    </div>
    <div className="flex-1 flex flex-col gap-1 px-1 bg-[#606060] rounded-b-[4px] text-[23px]">
      <div className="flex items-center h-[56px] text-[24px]">
        <label className="flex items-center flex-1 h-[36px] bg-[#cbcbcb] rounded-[3px] text-black">
          <input
            aria-label="Search details"
            placeholder="Search"
            className="flex-1 pl-[8px] bg-transparent placeholder:text-[#8a8a8a] outline-none"
          />
          <Magnifier className="w-[32px] h-[32px]" />
        </label>
        <button aria-label="Property matrix" className="flex items-center justify-center w-[54px] h-[46px] ml-[10px] border-2 border-[#f0f0f0] rounded-[2px] bg-linear-to-b from-[#dadada] to-[#ababab]">
          <svg viewBox="0 0 28 28" className="w-7 h-7">
            <path d="M0 2H28M0 8H28M0 14H28M0 20H28M0 26H28" stroke="#757575" strokeWidth="3.5" />
            <path d="M5 0V28M14 0V28" stroke="#c4c4c4" strokeWidth="1.5" />
          </svg>
        </button>
        <button aria-label="View options" className="flex items-center gap-[6px] ml-[6px] mr-[8px] text-[#d0d0d0]">
          <Eye />
          <Down className="w-[16px] h-[10px]" />
        </button>
      </div>

      <section className="bg-[#3e3e3e] rounded-[4px]">
        <DetailsHead>Variable</DetailsHead>
        <div className="pb-[2px]">
          {fieldRows.map((row) => {
            const id = row.label.toLowerCase().replace(/ /g, "-");
            return (
              <div key={row.label} className={`flex items-center text-[#d0d0d0] ${row.h}`}>
                <label htmlFor={id} className="w-[328px] h-full flex items-center pl-[32px] pb-[2px] border-r-2 border-[#2c2c2c]">
                  {row.label}
                </label>
                <div className="pl-[10px]">
                  <Field row={row} id={id} />
                </div>
              </div>
            );
          })}
        </div>
        <button aria-label="Show advanced" className="flex justify-center items-center w-full h-[30px] pr-[32px] border-t-2 border-[#2f2f2f] bg-[#464646] rounded-b-[4px]">
          <svg viewBox="0 0 20 16" className="w-5 h-4">
            <path d="M0 0H20V3H0ZM1 5H19L10 15Z" fill="#dcdcdc" />
          </svg>
        </button>
      </section>

      <section className="bg-[#3e3e3e] rounded-[4px]">
        <DetailsHead>Default Value</DetailsHead>
        <p className="h-[38px] pl-[32px] leading-[34px] text-[#d0d0d0]">Editing this value is not allowed</p>
      </section>

      <section className="bg-[#3e3e3e] rounded-[4px] pb-1">
        <DetailsHead>Events</DetailsHead>
        {events.map((name) => (
          <div key={name} className="flex items-center h-[50px] text-[#d0d0d0]">
            <span className="w-[328px] h-full flex items-center gap-[9px] pl-[32px] border-r-2 border-[#2c2c2c] whitespace-nowrap">
              <EventIcon />
              {name}
            </span>
            <button
              aria-label={`Add ${name}`}
              className="flex items-center justify-center w-[300px] h-[40px] ml-[10px] bg-[#52a853] border-2 border-[#3f8a41]"
            >
              <Plus />
            </button>
          </div>
        ))}
      </section>
    </div>
  </aside>
);

/* ---------- taskbar ---------- */

const TaskItem = ({ label, active, children }) => (
  <button aria-label={label} className={`relative w-[98px] h-full flex items-center justify-center ${active ? "bg-[#4c4c4c]" : ""}`}>
    {children}
    <span className={`absolute bottom-0 h-1 bg-[#76b9ed] ${active ? "inset-x-0" : "inset-x-[9px]"}`} />
  </button>
);

const Taskbar = () => (
  <footer className="flex items-center h-[80px] bg-linear-to-b from-[#262626] from-45% to-black to-45% text-white text-[22px] font-['Open_Sans','Noto_Sans',sans-serif]">
    <button aria-label="Start" className="w-[96px] h-full bg-black flex items-center justify-center">
      <svg viewBox="0 0 34 34" className="w-[34px] h-[34px]">
        <path d="M0 5L14 3V16H0ZM16 2.7L34 0V16H16ZM0 18H14V31L0 29ZM16 18H34V34L16 31.3Z" fill="#fff" />
      </svg>
    </button>
    <input
      aria-label="Search the web and Windows"
      placeholder="Search the web and Windows"
      className="w-[689px] h-full pl-[23px] bg-[#333333] text-[28px] placeholder:text-[#9a9a9a] outline-none"
    />
    <button aria-label="Task view" className="relative w-[98px] h-full flex items-center justify-center">
      <span className="absolute left-[30px] top-0 whitespace-nowrap text-[24px] leading-[30px] text-black font-[Roboto]">7 items</span>
      <svg viewBox="0 0 40 28" className="w-[40px] h-[28px] mr-[4px]">
        <path d="M9 1.5H31V26.5H9ZM6 5H1.5V23H6M34 5H38.5V23H34" fill="none" stroke="#fff" strokeWidth="2.6" />
      </svg>
    </button>
    <TaskItem label="File Explorer">
      <svg viewBox="0 0 44 36" className="w-[44px] h-[36px]">
        <path d="M1 1H18L21 4H43V34H1Z" fill="#f7d673" />
        <path d="M1 1H18L21 4L19 7H1Z" fill="#f0b92b" />
        <path d="M3 3H11V5H3Z" fill="#30b4ee" />
        <path d="M1 8H43V34H1Z" fill="#fbe08c" />
        <path d="M8 36V22Q8 19 11 19H33Q36 19 36 22V36H28V27H17V36Z" fill="#22baf0" />
      </svg>
    </TaskItem>
    <TaskItem label="Epic Games">
      <svg viewBox="0 0 44 48" className="w-[44px] h-[48px]">
        <path d="M4 1H40Q43 1 43 4V37Q43 40 40 41L22 47L4 41Q1 40 1 37V4Q1 1 4 1Z" fill="#333" stroke="#e8e8e8" strokeWidth="2" />
        <path d="M15 41H29L22 45Z" fill="#fff" />
        <text x="22" y="24" textAnchor="middle" fill="#fff" fontSize="20" fontWeight="700" fontFamily="Roboto Condensed, Roboto">EPIC</text>
        <text x="22" y="36" textAnchor="middle" fill="#fff" fontSize="10" fontWeight="700" fontFamily="Roboto">GAMES</text>
      </svg>
    </TaskItem>
    <TaskItem label="Firefox">
      <span className="w-[44px] h-[44px] rounded-full bg-[radial-gradient(circle_at_55%_35%,#3aa0dc_0%,#20509c_45%,transparent_60%)] flex items-center justify-center text-[#f08a1c]">
        <FaFirefoxBrowser className="w-[44px] h-[44px]" />
      </span>
    </TaskItem>
    <TaskItem label="Visual Studio">
      <svg viewBox="0 0 46 48" className="w-[46px] h-[48px]">
        <path d="M0 12L32 0L46 5V48H0Z" fill="#68217a" />
        <path d="M36 4L42 7V42L36 44L17 28L7 36L3 34V15L7 13L17 21ZM35 16L24 24.5L35 33ZM7.5 19V30L13 24.5Z" fill="#fff" fillRule="evenodd" />
      </svg>
    </TaskItem>
    <TaskItem label="Unreal Engine" active>
      <svg viewBox="0 0 24 24" className="w-[46px] h-[46px]">
        <circle cx="12" cy="12" r="11.3" fill="#2a2a2a" stroke="#d8d8d8" strokeWidth="1" />
        <path d={U_PATH} fill="#fff" />
      </svg>
    </TaskItem>
    <TaskItem label="Word">
      <svg viewBox="0 0 42 42" className="w-[42px] h-[42px]">
        <path d="M22 5H41V36H22Z" fill="#fff" stroke="#2b579a" strokeWidth="1.5" />
        <path d="M25 10H38M25 14H38M25 18H38M25 22H38M25 26H38M25 30H38" stroke="#2b579a" strokeWidth="1.8" />
        <path d="M0 4L25 0V42L0 37Z" fill="#2b579a" />
        <text x="12" y="27" textAnchor="middle" fill="#fff" fontSize="17" fontWeight="700" fontFamily="Roboto">W</text>
      </svg>
    </TaskItem>
    <span className="flex-1" />
    <button aria-label="Show hidden icons" className="mr-[36px]">
      <svg viewBox="0 0 28 16" className="w-7 h-4"><path d="M2 14L14 2L26 14" fill="none" stroke="#fff" strokeWidth="2.4" /></svg>
    </button>
    <svg viewBox="0 0 32 26" className="w-8 h-[26px] mr-[36px]" aria-label="Battery">
      <path d="M1 2H28V18H1ZM28 6H31V11" fill="none" stroke="#fff" strokeWidth="2.2" />
      <path d="M5 6H8V14H5Z" fill="#fff" />
      <circle cx="21" cy="16" r="9" fill="#10902a" />
      <path d="M21 9Q26 15 21 21Q16 15 21 9ZM21 13V24" fill="none" stroke="#fff" strokeWidth="1.8" />
    </svg>
    <svg viewBox="0 0 26 26" className="w-[26px] h-[26px] mr-[31px]" aria-label="Network">
      <path d="M1 25Q3 4 25 1M7 25Q9 10 25 7M13 25Q14 15 25 13" fill="none" stroke="#ddd" strokeWidth="2" />
      <circle cx="21" cy="22" r="3.5" fill="#fff" />
    </svg>
    <svg viewBox="0 0 30 24" className="w-[30px] h-6 mr-[36px]" aria-label="Muted">
      <path d="M1 8H5L11 1V23L5 16H1ZM18 8L28 18M28 8L18 18" fill="none" stroke="#fff" strokeWidth="2" />
    </svg>
    <svg viewBox="0 0 32 32" className="w-8 h-8 mr-[32px]" aria-label="Notifications">
      <path d="M0 0H32V26H21L16 32L11 26H0Z" fill="#fff" />
      <path d="M6 7H26M6 13H26M6 19H19" stroke="#111" strokeWidth="2.2" />
    </svg>
    <svg viewBox="0 0 46 26" className="w-[46px] h-[26px] mr-[30px]" aria-label="Keyboard">
      <path d="M1 1H45V25H1Z" fill="none" stroke="#fff" strokeWidth="2" />
      <path d="M6 7H40M6 13H40" stroke="#fff" strokeWidth="2.4" strokeDasharray="2.5 2" />
      <path d="M6 19H10M13 19H33M36 19H40" stroke="#fff" strokeWidth="2.4" />
    </svg>
    <span className="mr-[32px]">ENG</span>
    <div className="text-center leading-[34px] pb-[2px] mr-[20px]">
      <div>23:43</div>
      <div>11/03/2016</div>
    </div>
    <div className="w-[12px] h-full border-l-2 border-[#7a7a7a]" />
  </footer>
);

export default function App() {
  return (
    <div className="min-h-screen flex flex-col bg-[#222222] text-[#dcdcdc] text-[24px] leading-[28px] font-[Roboto,sans-serif]">
      <TitleBar />
      <MenuBar />
      <main className="flex flex-1 gap-[10px] pl-[2px] pr-[2px] pt-[2px] pb-[2px]">
        <div className="flex flex-col w-[360px] shrink-0">
          <Components />
          <MyBlueprint />
        </div>
        <div className="flex flex-col flex-1 min-w-0">
          <Toolbar />
          <div className="flex gap-[2px] pl-2 mt-[10px]">
            <DockTab icon={<ViewportIcon />} label="Viewport" />
            <DockTab icon={<FuncIcon />} label="Construction Script" />
            <DockTab icon={<GraphIcon />} label="Event Graph" active />
          </div>
          <Graph />
          <FindResults />
        </div>
        <Details />
      </main>
      <Taskbar />
    </div>
  );
}
